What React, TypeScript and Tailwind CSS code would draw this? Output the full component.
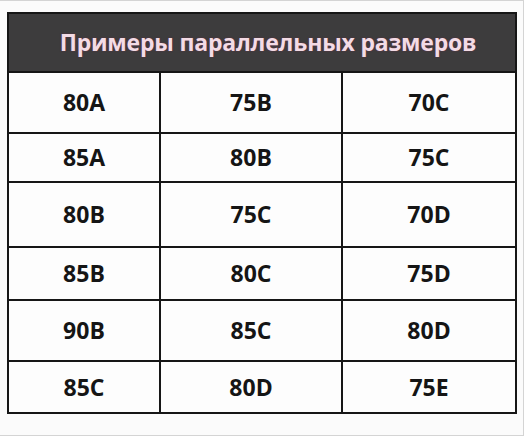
import React from 'react';

const ROWS: { cells: string[]; h: string }[] = [
  { cells: ['80A', '75B', '70C'], h: 'h-[61px]' },
  { cells: ['85A', '80B', '75C'], h: 'h-[49px]' },
  { cells: ['80B', '75C', '70D'], h: 'h-[65px]' },
  { cells: ['85B', '80C', '75D'], h: 'h-[53px]' },
  { cells: ['90B', '85C', '80D'], h: 'h-[61px]' },
  { cells: ['85C', '80D', '75E'], h: 'h-[52px]' },
];

export default function App() {
  return (
    <div
      className="w-[528px] h-[438px] bg-white"
      style={{ fontFamily: '"Open Sans", "DejaVu Sans", sans-serif' }}
    >
      <div className="w-[524px] h-[436px] bg-[#fbfbfb] border-r border-b border-t border-[#d4d4d4] pt-[11px] pl-[7px]">
        <div className="w-[510px] border-2 border-[#161616] bg-[#fdfdfd]">
          {/* Header */}
          <div className="h-[57px] bg-[#3d3c3d] flex items-center justify-center pl-[12px]">
            <span className="text-[23px] font-bold text-[#f3dbe5] tracking-[-0.2px] [text-shadow:0_0_2px_rgba(120,40,70,0.6)]">
              Примеры параллельных размеров
            </span>
          </div>

          {/* Rows */}
          {ROWS.map((row, i) => (
            <div
              key={i}
              className={`grid grid-cols-[150px_182px_174px] border-t-2 border-[#161616] ${row.h}`}
            >
              {row.cells.map((c, j) => (
                <div
                  key={j}
                  className={`flex items-center justify-center text-[23px] font-bold text-[#151515] ${
                    j > 0 ? 'border-l-2 border-[#161616]' : ''
                  }`}
                >
                  {c}
                </div>
              ))}
            </div>
          ))}
        </div>
      </div>
    </div>
  );
}
